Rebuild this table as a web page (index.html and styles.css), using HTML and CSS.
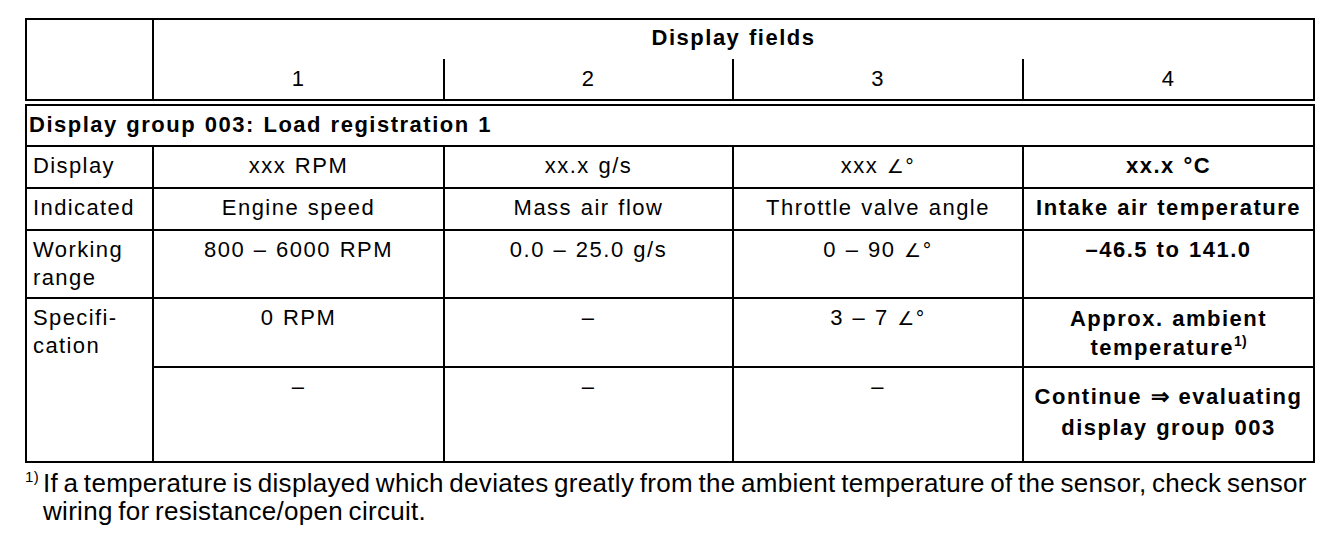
FILE: index.html
```html
<!DOCTYPE html>
<html lang="en">
<head>
    <meta charset="UTF-8">
    <meta name="viewport" content="width=device-width, initial-scale=1.0">
    <title>Display group 003</title>
    <link rel="stylesheet" href="styles.css">
</head>
<body>
    <table class="groups">
        <colgroup>
            <col class="c-label">
            <col class="c-field">
            <col class="c-field2">
            <col class="c-field3">
            <col class="c-field">
        </colgroup>
        <tr class="head-top">
            <th class="corner" rowspan="2"></th>
            <th class="fields" colspan="4">Display fields</th>
        </tr>
        <tr class="head-nums">
            <th>1</th>
            <th>2</th>
            <th>3</th>
            <th>4</th>
        </tr>
        <tr class="group-row">
            <td colspan="5">Display group 003: Load registration 1</td>
        </tr>
        <tr class="r-short">
            <td class="label">Display</td>
            <td>xxx RPM</td>
            <td>xx.x g/s</td>
            <td>xxx <span class="ang">∠°</span></td>
            <td class="hl">xx.x °C</td>
        </tr>
        <tr class="r-short">
            <td class="label">Indicated</td>
            <td>Engine speed</td>
            <td>Mass air flow</td>
            <td>Throttle valve angle</td>
            <td class="hl">Intake air temperature</td>
        </tr>
        <tr class="r-work">
            <td class="label">Working<br>range</td>
            <td>800 – 6000 RPM</td>
            <td>0.0 – 25.0 g/s</td>
            <td>0 – 90 <span class="ang">∠°</span></td>
            <td class="hl">–46.5 to 141.0</td>
        </tr>
        <tr class="r-spec">
            <td class="label" rowspan="2">Specifi-<br>cation</td>
            <td>0 RPM</td>
            <td>–</td>
            <td>3 – 7 <span class="ang">∠°</span></td>
            <td class="hl mid">Approx. ambient<br>temperature<sup>1)</sup></td>
        </tr>
        <tr class="r-extra">
            <td>–</td>
            <td>–</td>
            <td>–</td>
            <td class="hl mid tall">Continue ⇒ evaluating<br>display group 003</td>
        </tr>
    </table>

    <p class="note"><sup>1)</sup>If a temperature is displayed which deviates greatly from the ambient temperature of the sensor, check sensor<br>wiring for resistance/open circuit.</p>
</body>
</html>
```

FILE: styles.css
```css
body {
    margin: 0;
    padding: 18px 0 0 25px;
    background: #fff;
    color: #000;
    font-family: "Liberation Sans", Arial, sans-serif;
}

.groups {
    border-collapse: collapse;
    table-layout: fixed;
    width: 1289px;
    font-size: 22px;
    line-height: 28px;
    letter-spacing: 1.5px;
    word-spacing: 1px;
    border: 2px solid #000;
}
.c-label { width: 127px; }
.c-field { width: 291px; }
.c-field2 { width: 289px; }
.c-field3 { width: 290px; }

.groups th,
.groups td {
    padding: 5px 2px 0;
    text-align: center;
    vertical-align: top;
    border: 2px solid #000;
}

/* header */
.groups th {
    font-weight: normal;
    vertical-align: middle;
    padding: 0;
}
.head-top { height: 40px; }
.head-nums { height: 43px; }
.groups .fields {
    font-weight: bold;
    border-bottom: none;
    padding-bottom: 3px;
}
.head-nums th {
    border-top: none;
    border-bottom: 7px double #000;
}
.groups .corner {
    border-bottom: 7px double #000;
}

.group-row { height: 44px; }
.group-row td {
    text-align: left;
    font-weight: bold;
    vertical-align: middle;
    padding: 0 2px;
}

.r-short { height: 42px; }
.r-work { height: 68px; }
.r-spec { height: 69px; }
.r-extra { height: 95px; }

.groups .label {
    text-align: left;
    padding-left: 6px;
    letter-spacing: 1.4px;
}
.groups .hl {
    font-weight: bold;
}
.groups .mid {
    vertical-align: middle;
    padding-top: 0;
    line-height: 29px;
}
.groups .tall {
    line-height: 31px;
    padding-bottom: 6px;
}
.ang {
    font-family: "DejaVu Sans", sans-serif;
    font-size: 19px;
    letter-spacing: 1px;
}
.groups sup {
    font-size: 14px;
    line-height: 0;
    vertical-align: 9px;
    letter-spacing: 0;
}

.note {
    margin: 6px 0 0;
    padding-left: 18px;
    text-indent: -18px;
    font-size: 26px;
    line-height: 28px;
    letter-spacing: 0.3px;
    word-spacing: -2px;
    white-space: nowrap;
}
.note sup {
    display: inline-block;
    width: 18px;
    text-indent: 0;
    font-size: 15px;
    line-height: 0;
    vertical-align: 10px;
}
```
